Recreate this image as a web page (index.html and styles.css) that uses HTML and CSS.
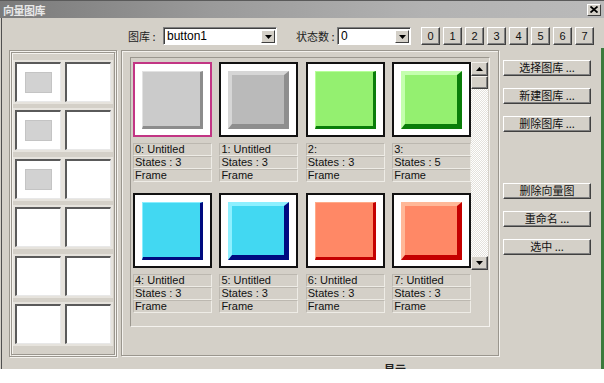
FILE: index.html
```html
<!DOCTYPE html>
<html>
<head>
<meta charset="utf-8">
<link rel="stylesheet" href="styles.css">
</head>
<body>
<div class="window">
  <div class="titlebar">
    <span class="title">向量图库</span>
    <span class="close"><svg width="8" height="7" viewBox="0 0 8 7"><path d="M0.5 0.5 L7.5 6.5 M7.5 0.5 L0.5 6.5" stroke="#000" stroke-width="1.8"/></svg></span>
  </div>
  <div class="body">
    <div class="toolbar">
      <span class="lbl lbl-lib">图库 :</span>
      <div class="combo combo-lib"><span class="combo-text">button1</span><span class="combo-btn"><svg width="7" height="4" viewBox="0 0 7 4"><path d="M0 0 H7 L3.5 4 Z" fill="#000"/></svg></span></div>
      <span class="lbl lbl-states">状态数 :</span>
      <div class="combo combo-states"><span class="combo-text">0</span><span class="combo-btn"><svg width="7" height="4" viewBox="0 0 7 4"><path d="M0 0 H7 L3.5 4 Z" fill="#000"/></svg></span></div>
      <div class="nums">
        <span class="num">0</span><span class="num">1</span><span class="num">2</span><span class="num">3</span><span class="num">4</span><span class="num">5</span><span class="num">6</span><span class="num">7</span>
      </div>
    </div>
    <div class="content">
      <div class="left-frame">
        <div class="left-inner">
          <div class="cells">
            <div class="cell"><div class="mini"></div></div><div class="cell"></div>
            <div class="cell"><div class="mini"></div></div><div class="cell"></div>
            <div class="cell"><div class="mini"></div></div><div class="cell"></div>
            <div class="cell"></div><div class="cell"></div>
            <div class="cell"></div><div class="cell"></div>
            <div class="cell"></div><div class="cell"></div>
          </div>
        </div>
      </div>
      <div class="main-frame">
        <div class="listbox">
          <div class="items">
            <div class="item">
              <div class="thumb sel"><div class="shape gray-a"></div></div>
              <div class="label">0: Untitled</div><div class="label">States : 3</div><div class="label">Frame</div>
            </div>
            <div class="item">
              <div class="thumb"><div class="shape gray-b"></div></div>
              <div class="label">1: Untitled</div><div class="label">States : 3</div><div class="label">Frame</div>
            </div>
            <div class="item">
              <div class="thumb"><div class="shape green-a"></div></div>
              <div class="label">2:</div><div class="label">States : 3</div><div class="label">Frame</div>
            </div>
            <div class="item">
              <div class="thumb"><div class="shape green-b"></div></div>
              <div class="label">3:</div><div class="label">States : 5</div><div class="label">Frame</div>
            </div>
            <div class="item">
              <div class="thumb"><div class="shape cyan-a"></div></div>
              <div class="label">4: Untitled</div><div class="label">States : 3</div><div class="label">Frame</div>
            </div>
            <div class="item">
              <div class="thumb"><div class="shape cyan-b"></div></div>
              <div class="label">5: Untitled</div><div class="label">States : 3</div><div class="label">Frame</div>
            </div>
            <div class="item">
              <div class="thumb"><div class="shape red-a"></div></div>
              <div class="label">6: Untitled</div><div class="label">States : 3</div><div class="label">Frame</div>
            </div>
            <div class="item">
              <div class="thumb"><div class="shape red-b"></div></div>
              <div class="label">7: Untitled</div><div class="label">States : 3</div><div class="label">Frame</div>
            </div>
          </div>
          <div class="vscroll">
            <div class="sbtn"><svg width="7" height="4" viewBox="0 0 7 4"><path d="M0 4 H7 L3.5 0 Z" fill="#000"/></svg></div>
            <div class="sthumb"></div>
            <div class="strack"></div>
            <div class="sbtn"><svg width="7" height="4" viewBox="0 0 7 4"><path d="M0 0 H7 L3.5 4 Z" fill="#000"/></svg></div>
          </div>
        </div>
      </div>
      <div class="buttons">
        <div class="btn">选择图库 ...</div>
        <div class="btn">新建图库 ...</div>
        <div class="btn">删除图库 ...</div>
        <div class="btn btn-gap">删除向量图</div>
        <div class="btn">重命名 ...</div>
        <div class="btn">选中 ...</div>
      </div>
    </div>
    <div class="footer">显示</div>
  </div>
</div>
</body>
</html>
```

FILE: styles.css
```css
html, body {
  margin: 0;
  padding: 0;
  background: #ffffff;
}

body {
  font-family: "Liberation Sans", "Noto Sans CJK SC", sans-serif;
  font-size: 11px;
  color: #000;
}

.window {
  width: 604px;
  height: 369px;
  overflow: hidden;
  background: #d4d0c8;
  display: flex;
  flex-direction: column;
}

.titlebar {
  height: 18px;
  flex: none;
  box-sizing: border-box;
  border-top: 1px solid #5a5a5a;
  background: linear-gradient(to right, #7a7a7a 0%, #9a9a9a 35%, #b2b2b2 70%, #bababa 100%);
  display: flex;
  align-items: center;
  justify-content: space-between;
  padding: 0 3px 0 3px;
}

.title {
  font-family: "Noto Sans CJK SC", sans-serif;
  font-weight: bold;
  font-size: 11px;
  color: #e8e8e8;
  letter-spacing: -0.5px;
  line-height: 14px;
}

.close {
  width: 14px;
  height: 12px;
  box-sizing: border-box;
  background: #d4d0c8;
  border: 1px solid;
  border-color: #fff #404040 #404040 #fff;
  display: flex;
  align-items: center;
  justify-content: center;
}

.body {
  flex: 1;
  display: flex;
  flex-direction: column;
  background: linear-gradient(#3c7a3c, #3c7a3c) right 30px / 3px 100% no-repeat, #d4d0c8;
  box-shadow: inset 1px 0 #d4d0c8, inset 2px 0 #505050;
}

/* toolbar */
.toolbar {
  margin-top: 9px;
  height: 18px;
  display: flex;
  align-items: center;
}

.lbl {
  font-family: "Noto Sans CJK SC", sans-serif;
  font-size: 11px;
  color: #222;
  white-space: nowrap;
}

.lbl-lib {
  margin-left: 128px;
  width: 35px;
}

.lbl-states {
  margin-left: 19px;
  width: 41px;
}

.combo {
  height: 18px;
  box-sizing: border-box;
  background: #fff;
  border: 1px solid;
  border-color: #808080 #fff #fff #808080;
  box-shadow: inset 1px 1px #404040;
  display: flex;
  align-items: stretch;
  padding: 2px 1px 1px 2px;
}

.combo-lib { width: 114px; }
.combo-states { width: 74px; }

.combo-text {
  flex: 1;
  font-size: 12px;
  line-height: 13px;
  padding-left: 1px;
  color: #000;
}

.combo-btn {
  width: 14px;
  box-sizing: border-box;
  background: #d4d0c8;
  border: 1px solid;
  border-color: #fff #404040 #404040 #fff;
  display: flex;
  align-items: center;
  justify-content: center;
}

.nums {
  margin-left: 10px;
  display: flex;
  gap: 3px;
}

.num {
  width: 19px;
  height: 18px;
  box-sizing: border-box;
  border: 1px solid;
  border-color: #fff #404040 #404040 #fff;
  box-shadow: inset -1px -1px #808080;
  display: flex;
  align-items: center;
  justify-content: center;
  font-size: 11px;
  color: #111;
}

/* content */
.content {
  margin-top: 5px;
  padding-left: 9px;
  display: flex;
  align-items: flex-start;
}

.left-frame {
  width: 108px;
  height: 307px;
  box-sizing: border-box;
  border: 1px solid #9a968e;
  box-shadow: inset 1px 1px #f4f2ee, 1px 1px #f4f2ee;
  padding: 1px;
}

.left-inner {
  height: 100%;
  box-sizing: border-box;
  border: 1px solid #9a968e;
  box-shadow: inset 1px 1px #f4f2ee, 1px 1px #f4f2ee;
  padding: 9px 0 0 3px;
}

.cells {
  display: grid;
  grid-template-columns: 46px 46px;
  grid-auto-rows: 40px;
  column-gap: 4px;
  row-gap: 8.4px;
}

.cell {
  box-sizing: border-box;
  background: #fff;
  border-top: 2px solid #5a5a5a;
  border-left: 2px solid #5a5a5a;
  border-right: 1px solid #e8e8e8;
  border-bottom: 1px solid #e8e8e8;
  box-shadow: 0 0 0 2px #e6e3dd;
  padding: 8px 0 0 8px;
}

.mini {
  width: 27px;
  height: 21px;
  box-sizing: border-box;
  background: #d2d2d2;
  border: 1px solid #c4c4c4;
}

.main-frame {
  margin-left: 4px;
  width: 378px;
  height: 306px;
  box-sizing: border-box;
  border: 1px solid #9a968e;
  box-shadow: inset 1px 1px #f4f2ee, 1px 1px #f4f2ee;
  padding: 6px 0 0 8px;
}

.listbox {
  width: 360px;
  height: 270px;
  box-sizing: border-box;
  border: 1px solid;
  border-color: #9a968e #f4f2ee #f4f2ee #9a968e;
  padding: 4px 1px 0 2px;
  display: flex;
  justify-content: space-between;
  align-items: flex-start;
}

.items {
  width: 338px;
  display: grid;
  grid-template-columns: repeat(4, 79px);
  column-gap: 7.4px;
  row-gap: 11px;
}

.item {
  display: flex;
  flex-direction: column;
}

.thumb {
  height: 75px;
  box-sizing: border-box;
  border: 2px solid #111;
  background: #fff;
  padding: 7px 0 0 7px;
  margin-bottom: 6px;
}

.thumb.sel {
  border-color: #c23584;
}

.shape {
  width: 61px;
  height: 58px;
  box-sizing: border-box;
  border-style: solid;
}

.gray-a {
  background: #cbcbcb;
  border-width: 1px 3px 3px 1px;
  border-color: #e2e2e2 #8c8c8c #8c8c8c #e2e2e2;
}

.gray-b {
  background: #bababa;
  border-width: 4px 5px 5px 4px;
  border-color: #d6d6d6 #8e8e8e #8e8e8e #d6d6d6;
}

.green-a {
  background: #94f070;
  border-width: 1px 3px 3px 1px;
  border-color: #b6ff98 #0a7d0a #0a7d0a #b6ff98;
}

.green-b {
  background: #94f070;
  border-width: 4px 5px 5px 4px;
  border-color: #c4ffae #0a7d0a #0a7d0a #c4ffae;
}

.cyan-a {
  background: #42d8f2;
  border-width: 1px 3px 3px 1px;
  border-color: #88eeff #000a80 #000a80 #88eeff;
}

.cyan-b {
  background: #42d8f2;
  border-width: 4px 5px 5px 4px;
  border-color: #8ef0ff #000a80 #000a80 #8ef0ff;
}

.red-a {
  background: #ff8866;
  border-width: 1px 3px 3px 1px;
  border-color: #ffaa88 #c40000 #c40000 #ffaa88;
}

.red-b {
  background: #ff8866;
  border-width: 4px 5px 5px 4px;
  border-color: #ffb898 #c40000 #c40000 #ffb898;
}

.label {
  height: 13px;
  box-sizing: border-box;
  border: 1px solid;
  border-color: #bcb8b0 #eeece6 #eeece6 #bcb8b0;
  font-size: 11px;
  line-height: 11px;
  padding-left: 1px;
  color: #111;
  white-space: nowrap;
  overflow: hidden;
}

.vscroll {
  width: 17px;
  height: 208px;
  display: flex;
  flex-direction: column;
  background: repeating-conic-gradient(#ffffff 0 25%, #e4e2dc 0 50%) 0 0 / 2px 2px;
}

.sbtn, .sthumb {
  height: 14px;
  flex: none;
  box-sizing: border-box;
  background: #d4d0c8;
  border: 1px solid;
  border-color: #f4f2ee #404040 #404040 #f4f2ee;
  box-shadow: inset -1px -1px #808080;
  display: flex;
  align-items: center;
  justify-content: center;
}

.sthumb {
  height: 13px;
}

.strack {
  flex: 1;
}

/* right buttons */
.buttons {
  margin-left: 4px;
  padding-top: 10px;
  width: 88px;
  display: flex;
  flex-direction: column;
  gap: 12px;
}

.btn {
  height: 16px;
  box-sizing: border-box;
  border: 1px solid;
  border-color: #fff #404040 #404040 #fff;
  box-shadow: inset -1px -1px #808080;
  font-family: "Noto Sans CJK SC", sans-serif;
  font-size: 11px;
  line-height: 13px;
  text-align: center;
  color: #111;
  white-space: nowrap;
}

.btn-gap {
  margin-top: 39px;
}

.footer {
  margin-top: 5px;
  padding-left: 384px;
  font-family: "Noto Sans CJK SC", sans-serif;
  font-size: 11px;
  font-weight: bold;
  line-height: 14px;
  color: #222;
}
```
